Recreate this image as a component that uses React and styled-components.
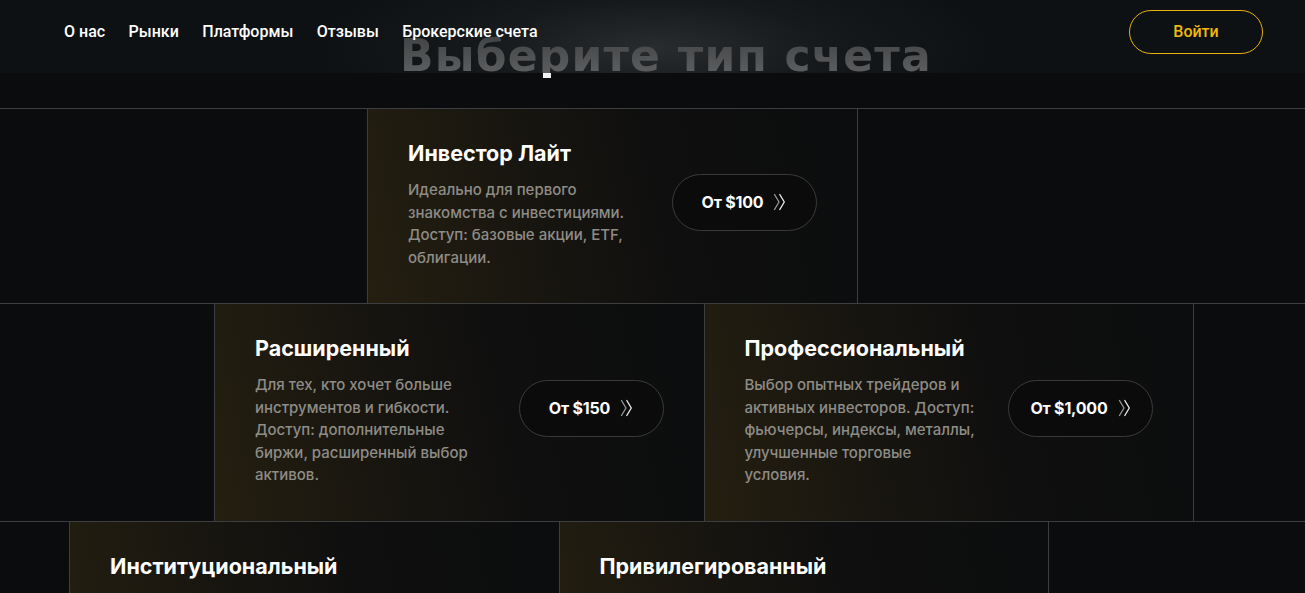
import React from "react";
import styled, { createGlobalStyle } from "styled-components";

const Global = createGlobalStyle`
  * { box-sizing: border-box; }
  html, body { margin: 0; padding: 0; background: #0b0c0d; overflow-x: hidden; }
  body { font-family: Inter, "Noto Sans", sans-serif; color: #fff; }
`;

const Page = styled.div`
  position: relative;
  min-height: 593px;
  background: #0b0c0d;
  overflow: hidden;
`;

const Header = styled.header`
  position: relative;
  height: 73px;
  display: flex;
  align-items: center;
  justify-content: space-between;
  padding: 0 42px 10px 64px;
  overflow: hidden;
  background:
    radial-gradient(ellipse 340px 95px at 655px 48px, rgba(44, 47, 49, 0.9) 0%, rgba(28, 31, 33, 0.6) 50%, rgba(14, 17, 19, 0) 100%),
    #0e1113;
`;

const Ghost = styled.h2`
  position: absolute;
  left: 400px;
  top: 29.5px;
  margin: 0;
  font-family: "DejaVu Sans", Inter, sans-serif;
  font-weight: 700;
  font-size: 44px;
  letter-spacing: 1.2px;
  line-height: 1.2;
  white-space: nowrap;
  background: linear-gradient(180deg, #404243 10%, #5a5b5c 75%);
  -webkit-background-clip: text;
  background-clip: text;
  color: transparent;
  pointer-events: none;
`;

const Nav = styled.nav`
  position: relative;
  display: flex;
  gap: 23.5px;
`;

const NavLink = styled.a`
  font-family: Roboto, "Noto Sans", sans-serif;
  font-weight: 500;
  font-size: 16px;
  color: #fff;
  text-decoration: none;
`;

const LoginButton = styled.button`
  position: relative;
  width: 134px;
  height: 44px;
  border-radius: 22px;
  border: 1px solid #e8b00a;
  background: transparent;
  color: #f0b90b;
  font-family: Roboto, "Noto Sans", sans-serif;
  font-weight: 500;
  font-size: 16px;
  cursor: pointer;
`;

const Caret = styled.span`
  position: absolute;
  left: 543px;
  top: 73px;
  width: 8px;
  height: 5px;
  background: #f2f2f2;
`;

const Grid = styled.section`
  margin-top: 35px;
`;

const Row = styled.div`
  display: flex;
  border-top: 1px solid #3d3e3f;
  padding-left: ${(p) => p.$offset}px;
`;

const Cell = styled.div`
  flex: 0 0 489.5px;
  border-left: 1px solid #3d3e3f;
`;

const Card = styled(Cell)`
  display: flex;
  align-items: center;
  justify-content: space-between;
  padding: 30px 40px 34px 40px;
  background: linear-gradient(78deg, #241f10 0%, #1a1710 28%, #0f0f0f 60%, #0c0d0e 100%);
`;

const Info = styled.div`
  width: 231px;
`;

const Title = styled.h3`
  margin: 0;
  font-family: Inter, sans-serif;
  font-weight: 700;
  font-size: 21.5px;
  line-height: 29px;
  color: #fff;
  white-space: nowrap;
`;

const Desc = styled.p`
  margin: 11px 0 0;
  font-family: Inter, sans-serif;
  font-weight: 500;
  font-size: 15px;
  line-height: 22.5px;
  color: #8e8c86;
`;

const PriceButton = styled.button`
  flex: 0 0 auto;
  width: 145px;
  height: 57px;
  margin-top: -4px;
  display: flex;
  align-items: center;
  justify-content: center;
  gap: 10px;
  border-radius: 29px;
  border: 1px solid #3a3a3a;
  background: #0b0b0b;
  color: #fff;
  font-family: Inter, sans-serif;
  font-weight: 700;
  font-size: 16px;
  letter-spacing: -0.2px;
  cursor: pointer;
`;

const Chevrons = () => (
  <svg width="13" height="18" viewBox="0 0 13 18" fill="none" strokeLinecap="round" strokeLinejoin="round">
    <path d="M1.5 1.5 L6 9 L1.5 16.5" stroke="#9a9a9a" strokeWidth="1.3" />
    <path d="M6.8 1.5 L11.3 9 L6.8 16.5" stroke="#f2f2f2" strokeWidth="1.3" />
  </svg>
);

const rows = [
  {
    offset: 367,
    cards: [
      {
        title: "Инвестор Лайт",
        desc: "Идеально для первого знакомства с инвестициями. Доступ: базовые акции, ETF, облигации.",
        price: "От $100",
      },
    ],
  },
  {
    offset: 214,
    cards: [
      {
        title: "Расширенный",
        desc: "Для тех, кто хочет больше инструментов и гибкости. Доступ: дополнительные биржи, расширенный выбор активов.",
        price: "От $150",
      },
      {
        title: "Профессиональный",
        desc: "Выбор опытных трейдеров и активных инвесторов. Доступ: фьючерсы, индексы, металлы, улучшенные торговые условия.",
        price: "От $1,000",
      },
    ],
  },
  {
    offset: 69,
    cards: [
      {
        title: "Институциональный",
        desc: "Для компаний, фондов и управляющих капиталом. Доступ: все рынки мира, персональный менеджер и API.",
        price: "От $10,000",
      },
      {
        title: "Привилегированный",
        desc: "Эксклюзивные условия для крупных клиентов. Доступ: приоритетная поддержка, закрытые продукты и аналитика.",
        price: "От $50,000",
      },
    ],
  },
];

const navItems = ["О нас", "Рынки", "Платформы", "Отзывы", "Брокерские счета"];

export default function App() {
  return (
    <Page>
      <Global />
      <Header>
        <Ghost>Выберите тип счета</Ghost>
        <Nav>
          {navItems.map((n) => (
            <NavLink key={n} href="#">{n}</NavLink>
          ))}
        </Nav>
        <LoginButton>Войти</LoginButton>
      </Header>
      <Caret />
      <Grid>
        {rows.map((row, i) => (
          <Row key={i} $offset={row.offset}>
            {row.cards.map((c) => (
              <Card key={c.title}>
                <Info>
                  <Title>{c.title}</Title>
                  <Desc>{c.desc}</Desc>
                </Info>
                <PriceButton>
                  {c.price}
                  <Chevrons />
                </PriceButton>
              </Card>
            ))}
            <Cell />
          </Row>
        ))}
      </Grid>
    </Page>
  );
}
